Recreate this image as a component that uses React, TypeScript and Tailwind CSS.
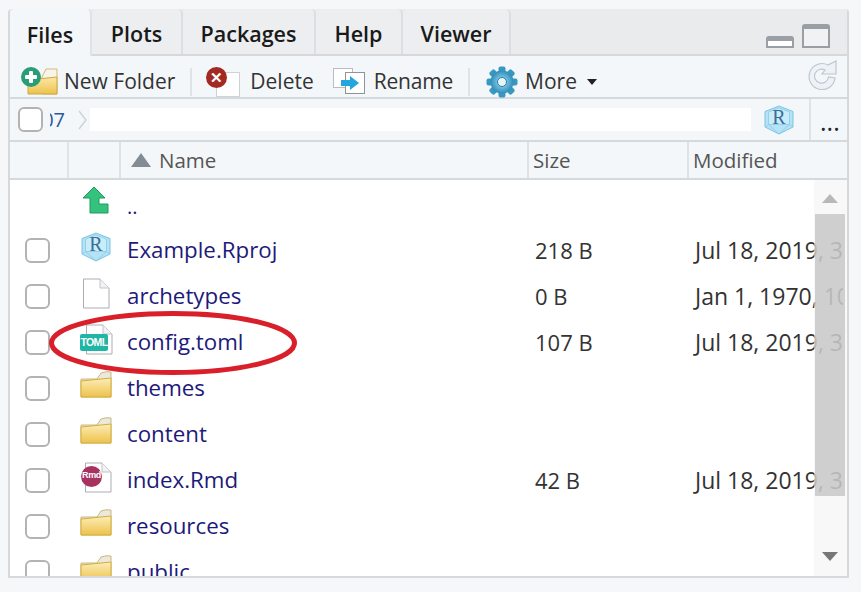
import React from "react";

const font = { fontFamily: '"Open Sans","Noto Sans",sans-serif' };

function Folder() {
  return (
    <svg width="32" height="28" viewBox="0 0 32 28">
      <defs>
        <linearGradient id="fg" x1="0" y1="0" x2="0" y2="1">
          <stop offset="0" stopColor="#fbeeb8" />
          <stop offset="1" stopColor="#eec24a" />
        </linearGradient>
      </defs>
      <path d="M1 8 L17 8 L21 2 Q26 0 31 1 L31 26 L1 26 Z" fill="#ece8dc" stroke="#c9b87e" />
      <path d="M1 10 L31 7 L31 26 L1 26 Z" fill="url(#fg)" stroke="#d4ad3c" />
    </svg>
  );
}

function Page({ children }: { children?: React.ReactNode }) {
  return (
    <svg width="28" height="31" viewBox="0 0 28 31">
      <path d="M1.5 1 L18 1 L27 10 L27 30 L1.5 30 Z" fill="#fff" stroke="#a9adb3" />
      <path d="M18 1 L18 10 L27 10" fill="#f1f2f3" stroke="#c2c5c9" />
      {children}
    </svg>
  );
}

function RCube() {
  return (
    <svg width="30" height="30" viewBox="0 0 30 30">
      <path d="M15 1 L29 6.5 L29 22 L15 29 L1 22 L1 6.5 Z" fill="#b5e2f5" stroke="#7cc3e4" />
      <path d="M4.5 7 L15 3 L25.5 7 L25.5 19.5 L4.5 19.5 Z M4.5 19.5 L1 22 M25.5 19.5 L29 22 M15 29 L4.5 19.5 M15 29 L25.5 19.5" fill="#c9ecf9" stroke="#86cbe8" strokeWidth="0.8" />
      <text x="15" y="19" textAnchor="middle" fontSize="20" fontFamily="Liberation Serif" fill="#3b6e96">R</text>
    </svg>
  );
}

function Up() {
  return (
    <svg width="28" height="28" viewBox="0 0 28 28">
      <path d="M13 1 L24 12 L18 12 L18 18 L27 18 L27 27 L9 27 L9 12 L2 12 Z" fill="#35c27c" stroke="#1f9c5f" />
    </svg>
  );
}

function Toml() {
  return (
    <div className="relative h-[31px] w-[32px]">
      <div className="absolute left-[5px] top-0">
        <Page />
      </div>
      <div className="absolute left-0 top-[10px] h-[17px] w-[28px] rounded-[2px] bg-[#21b5a5] text-center text-[10.5px] font-bold leading-[17px] text-white" style={{ fontFamily: "Liberation Sans", letterSpacing: "-0.6px" }}>
        TOML
      </div>
    </div>
  );
}

function Rmd() {
  return (
    <div className="relative h-[31px] w-[30px]">
      <div className="absolute left-[3px] top-0">
        <Page />
      </div>
      <div className="absolute left-0 top-[4px] flex h-[21px] w-[21px] items-center justify-center rounded-full bg-[#a8325f] text-[9px] font-bold text-white" style={{ fontFamily: "Liberation Sans", letterSpacing: "-0.4px" }}>
        Rmd
      </div>
    </div>
  );
}

function Gear() {
  return (
    <svg className="ml-[16px] mr-[7px]" width="32" height="32" viewBox="0 0 32 32">
      <defs>
        <radialGradient id="gear">
          <stop offset="0" stopColor="#a9e3f5" />
          <stop offset="1" stopColor="#2e8db9" />
        </radialGradient>
      </defs>
      {[0, 45, 90, 135].map((a) => (
        <rect key={a} x="12.5" y="0.5" width="7" height="31" rx="2" fill="#3898c4" transform={`rotate(${a} 16 16)`} />
      ))}
      <circle cx="16" cy="16" r="11.5" fill="url(#gear)" />
      <circle cx="16" cy="16" r="4.5" fill="#e6f5fa" stroke="#2a7fa8" />
    </svg>
  );
}

const Box = ({ extra = "" }: { extra?: string }) => (
  <div className={`h-[25px] w-[25px] shrink-0 rounded-[6px] border-2 border-[#b3b3b3] bg-white ${extra}`} />
);

const rows: { name: string; icon: React.ReactNode; size?: string; mod?: string }[] = [
  { name: "Example.Rproj", icon: <RCube />, size: "218 B", mod: "Jul 18, 2019, 3:14 PM" },
  { name: "archetypes", icon: <Page />, size: "0 B", mod: "Jan 1, 1970, 10:00 AM" },
  { name: "config.toml", icon: <Toml />, size: "107 B", mod: "Jul 18, 2019, 3:14 PM" },
  { name: "themes", icon: <Folder /> },
  { name: "content", icon: <Folder /> },
  { name: "index.Rmd", icon: <Rmd />, size: "42 B", mod: "Jul 18, 2019, 3:14 PM" },
  { name: "resources", icon: <Folder /> },
  { name: "public", icon: <Folder /> },
];

function Tab({ label, w, active }: { label: string; w: string; active?: boolean }) {
  return (
    <div className={`flex items-center justify-center rounded-t-[5px] border-r-2 pt-[6px] text-[21.5px] font-semibold text-[#1a1a1a] ${w} ${active ? "-mb-[2px] border-[#dfe3e6] bg-[#f4f7f9]" : "border-[#dcdfe2] bg-[#eceef0]"}`}>
      {label}
    </div>
  );
}

export default function App() {
  return (
    <div className="h-[592px] w-[861px] overflow-hidden bg-[#f5f7f9] pl-[8px] pt-[9px]" style={font}>
      <div className="relative flex h-[569px] w-[841px] flex-col overflow-hidden rounded-t-[4px] border-2 border-t-0 border-[#d5d9dc] bg-white">
        {/* tabs */}
        <div className="flex h-[47px] shrink-0 items-stretch border-b-2 border-[#d5d9dc] bg-[#e9ebed]">
          <Tab label="Files" w="w-[82px]" active />
          <Tab label="Plots" w="w-[91px]" />
          <Tab label="Packages" w="w-[133px]" />
          <Tab label="Help" w="w-[87px]" />
          <Tab label="Viewer" w="w-[108px]" />
          <div className="ml-auto mr-[17px] flex items-end gap-[8px] pb-[6px]">
            <div className="h-[12px] w-[28px] rounded-t-[3px] border-2 border-t-[5px] border-[#9a9fa5] bg-white" />
            <div className="h-[24px] w-[28px] rounded-t-[3px] border-2 border-t-[5px] border-[#9a9fa5] bg-[#f0f2f4]" />
          </div>
        </div>
        {/* toolbar */}
        <div className="flex h-[43px] shrink-0 items-center border-b-2 border-[#d5d9dc] bg-[#f4f7f9] pl-[11px] pt-[10px] text-[21px] text-[#333]">
          <div className="relative mr-[6px] h-[30px] w-[37px] shrink-0">
            <svg className="absolute left-[6px] top-[1px]" width="31" height="27" viewBox="0 0 31 27">
              <defs>
                <linearGradient id="nf" x1="0" y1="0" x2="0" y2="1">
                  <stop offset="0" stopColor="#fbe9a6" />
                  <stop offset="1" stopColor="#edc24d" />
                </linearGradient>
              </defs>
              <path d="M15 9 L19 1 L30 1 L30 26 L15 26 Z" fill="#f7f4e8" stroke="#cdbb7c" />
              <path d="M1 26 L1 12 L30 9 L30 26 Z" fill="url(#nf)" stroke="#cda93f" />
            </svg>
            <div className="absolute left-0 top-0 flex h-[20px] w-[20px] items-center justify-center rounded-full bg-[#2a9d78]">
              <div className="absolute h-[12px] w-[4px] rounded-[1px] bg-white" />
              <div className="absolute h-[4px] w-[12px] rounded-[1px] bg-white" />
            </div>
          </div>
          <span>New Folder</span>
          <div className="ml-[15px] h-[28px] w-[2px] shrink-0 bg-[#dfe3e6]" />
          <div className="relative ml-[14px] mr-[10px] h-[30px] w-[34px] shrink-0">
            <div className="absolute left-[10px] top-[5px] h-[25px] w-[24px] border border-[#cfd3d6] bg-white" />
            <div className="absolute left-0 top-0 flex h-[21px] w-[21px] items-center justify-center rounded-full bg-[#a32a22] text-[15px] font-bold leading-none text-white">✕</div>
          </div>
          <span>Delete</span>
          <div className="relative ml-[19px] mr-[9px] h-[28px] w-[32px] shrink-0">
            <div className="absolute left-0 top-0 h-[20px] w-[20px] border border-[#b9bdc1] bg-white" />
            <div className="absolute left-[12px] top-[4px] h-[22px] w-[20px] border border-[#8f9498] bg-white" />
            <svg className="absolute left-[8px] top-[8px]" width="18" height="14" viewBox="0 0 18 14"><path d="M0 4 H9 V0 L18 7 L9 14 V10 H0 Z" fill="#23a6e0" /></svg>
          </div>
          <span className="tracking-[-0.2px]">Rename</span>
          <div className="ml-[15px] h-[28px] w-[2px] shrink-0 bg-[#dfe3e6]" />
          <Gear />
          <span>More</span>
          <svg className="ml-[10px]" width="10" height="6" viewBox="0 0 10 6"><path d="M0 0 H10 L5 6 Z" fill="#222" /></svg>
          <svg className="mb-[15px] ml-auto mr-[10px]" width="30" height="31" viewBox="0 0 30 31">
            <path d="M21 6 A13 13 0 1 0 28 19 L21.5 18 A7 7 0 1 1 18 11 L15 15 L29 15 L29 2 Z" fill="#eef2f6" stroke="#bcc7d0" strokeWidth="1.2" />
          </svg>
        </div>
        {/* path bar */}
        <div className="flex h-[43px] shrink-0 items-center border-b-2 border-[#d5d9dc] bg-[#f4f7f9]">
          <Box extra="ml-[8px]" />
          <span className="ml-[7px] flex w-[15px] justify-end overflow-hidden text-[20px] text-[#2a5a9c]">07</span>
          <svg className="ml-[13px]" width="9" height="20" viewBox="0 0 9 20"><path d="M1 1 L8 10 L1 19" fill="none" stroke="#cfd3d7" strokeWidth="1.5" /></svg>
          <div className="ml-[3px] h-[23px] w-[661px] shrink-0 bg-white" />
          <div className="ml-[13px]"><RCube /></div>
          <div className="ml-[15px] h-full w-[2px] shrink-0 bg-[#dfe3e6]" />
          <span className="ml-[9px] mt-[4px] text-[25px] leading-none text-[#222]">...</span>
        </div>
        {/* header */}
        <div className="flex h-[38px] shrink-0 items-stretch border-b-2 border-[#d5d9dc] bg-[#f4f7f9] text-[20.5px] text-[#555]">
          <div className="w-[59px] border-r-2 border-[#dfe3e6]" />
          <div className="w-[52px] border-r-2 border-[#dfe3e6]" />
          <div className="flex w-[408px] items-center border-r-2 border-[#dfe3e6] pl-[10px]">
            <svg className="mr-[8px]" width="20" height="14" viewBox="0 0 20 14"><path d="M10 0 L20 14 H0 Z" fill="#838b95" /></svg>
            Name
          </div>
          <div className="flex w-[160px] items-center border-r-2 border-[#dfe3e6] pl-[4px]">Size</div>
          <div className="flex items-center pl-[4px]">Modified</div>
        </div>
        {/* list */}
        <div className="relative flex-1 overflow-hidden">
          <div className="flex h-[47px] items-center">
            <div className="flex w-[98px] shrink-0 justify-end pb-[7px]"><div className="-mr-[1px]"><Up /></div></div>
            <span className="ml-[19px] mt-[6px] text-[20px] text-[#1d1a7a]">..</span>
          </div>
          {rows.map((r) => (
            <div key={r.name} className="flex h-[46px] w-[833px] items-center overflow-hidden whitespace-nowrap">
              <div className="flex w-[60px] shrink-0 pl-[15px]"><Box /></div>
              <div className="flex w-[57px] shrink-0 justify-center pb-[6px] pr-[5px]">{r.icon}</div>
              <div className="w-[408px] shrink-0 text-[22.3px] text-[#1d1a7a]">{r.name}</div>
              <div className="w-[160px] shrink-0 text-[22px] text-[#333]">{r.size}</div>
              <div className="shrink-0 text-[23px] text-[#333]">{r.mod}</div>
            </div>
          ))}
          {/* scrollbar */}
          <div className="absolute bottom-0 right-0 top-0 flex w-[33px] flex-col items-center bg-[#f3f3f3]/60 pr-[2px]">
            <svg className="mt-[14px]" width="16" height="9" viewBox="0 0 16 9"><path d="M8 0 L16 9 H0 Z" fill="#b8b8b8" /></svg>
            <div className="mt-[11px] h-[282px] w-[30px] bg-[#bdbdbd]/70" />
            <svg className="mt-auto mb-[15px]" width="16" height="9" viewBox="0 0 16 9"><path d="M0 0 H16 L8 9 Z" fill="#777" /></svg>
          </div>
        </div>
        {/* annotation */}
        <svg className="pointer-events-none absolute left-0 top-0" width="841" height="569" viewBox="0 0 841 569">
          <ellipse cx="163" cy="334" rx="121.5" ry="29.5" fill="none" stroke="#d81f2a" strokeWidth="5" />
        </svg>
      </div>
    </div>
  );
}
